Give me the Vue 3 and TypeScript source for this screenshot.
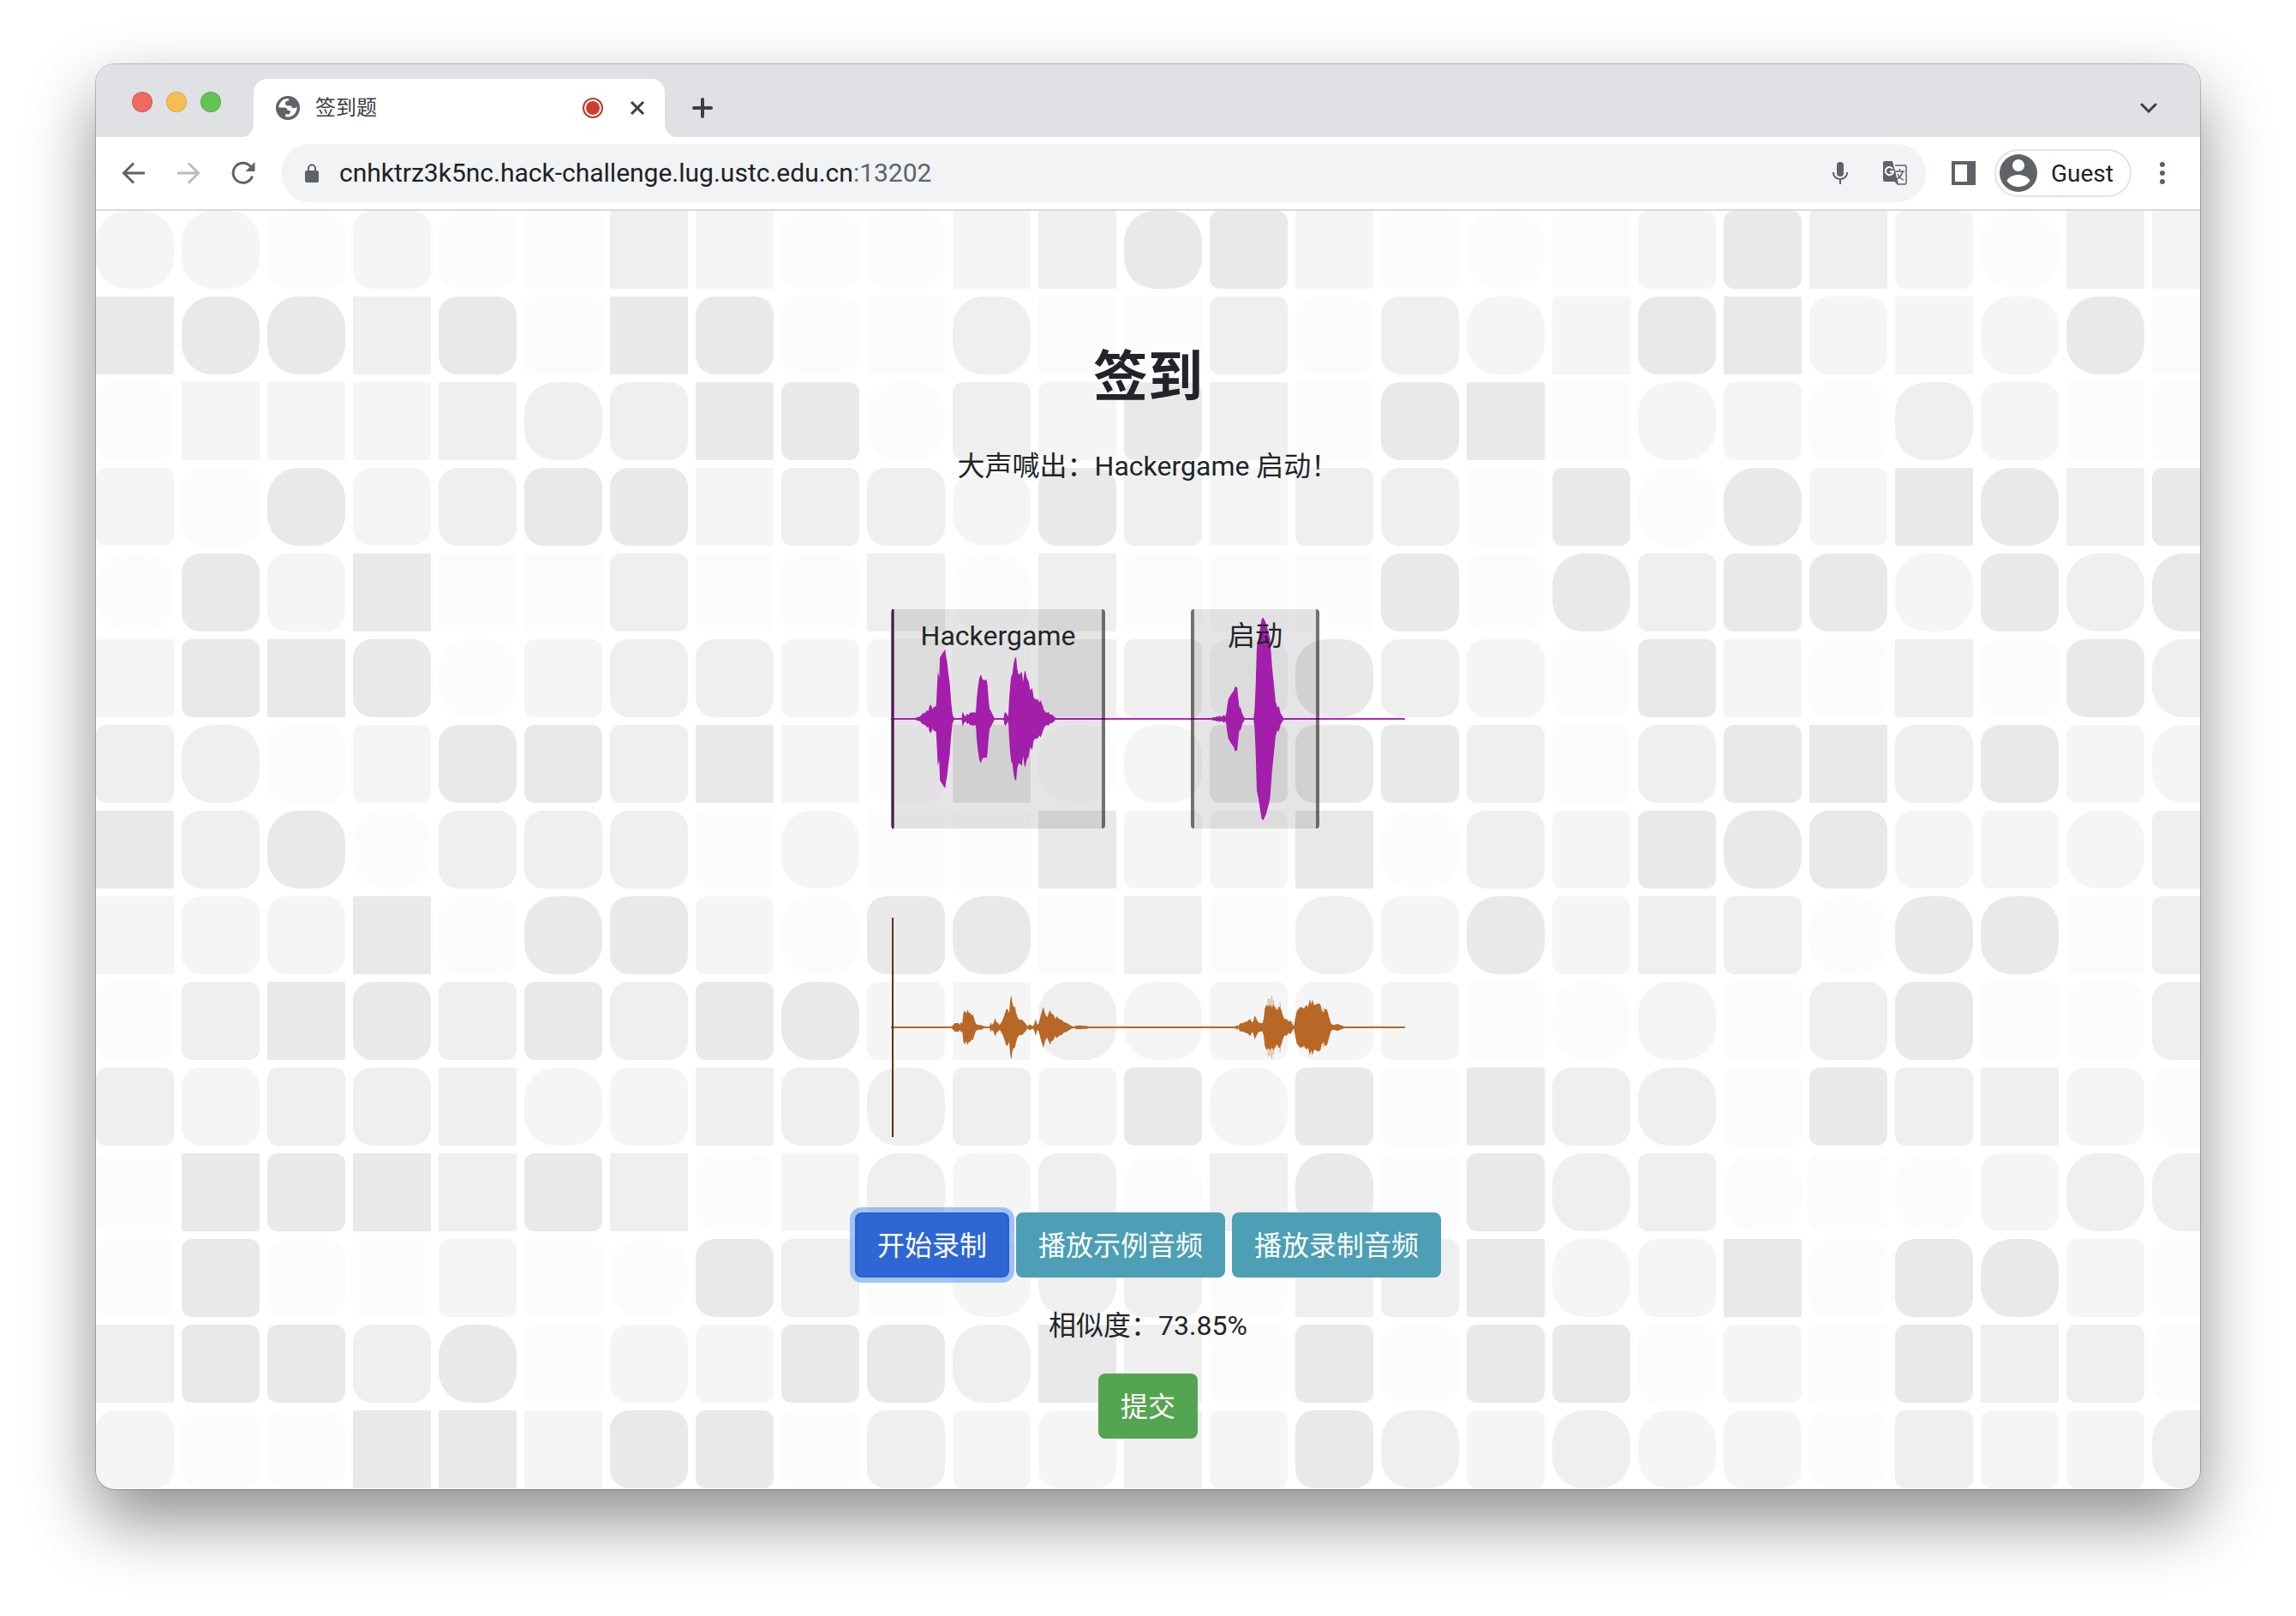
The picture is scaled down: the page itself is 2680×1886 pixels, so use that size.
<script setup lang="ts">
import { ref } from 'vue'

type Sample = [number, number]

// Each tile is a shade (A lightest to D darkest) and a corner size (0 to 3).
const rows: string[] = [
  'B3 B3 A2 B2 A2 A0 C0 B0 A2 A2 B0 C0 D3 D1 B0 A1 A3 A0 B1 D1 C0 B1 A3 C0 B0',
  'D0 D3 D3 C0 D2 A1 D0 D2 A2 A0 C3 A0 A0 C1 A2 C2 B3 B0 D2 D0 B2 B0 B3 D3 A0',
  'A2 B0 B0 B0 C0 C3 C2 D0 D1 A3 C1 B1 D1 C0 A0 D2 D0 A0 B3 B1 A2 C3 B2 A0 A1',
  'B1 A2 D3 B2 C2 D2 D2 B0 C1 C2 B3 D2 C1 B0 C1 C2 A1 D1 A3 D3 B1 D0 D3 C0 D1',
  'A3 D2 B2 D0 A0 A0 C1 A0 A2 C0 A3 C0 A1 A0 A0 D2 A2 D3 C1 D1 D2 B3 D2 C3 D3',
  'B0 D1 D0 D2 A3 B1 C2 C2 B1 B1 A1 C0 C1 B2 D3 C2 B2 A2 D1 B0 A2 C0 A2 D2 C3',
  'C1 C3 A2 B1 D2 D1 C1 D0 B0 A2 D0 A3 B3 D1 D2 D1 C1 A1 C2 D1 D0 C2 D2 B1 B3',
  'D0 C2 D3 A3 C2 C2 C2 A1 B3 A0 A0 D0 B1 B1 D0 A3 C2 B1 D1 D3 D2 B2 B1 B3 C1',
  'B0 B2 B2 D0 A2 D3 D2 B1 A3 D2 D3 A0 C0 A0 C3 B2 D3 B1 C0 C1 A3 D3 D3 A0 C1',
  'A2 C1 D0 D2 C1 D1 C2 D1 D3 B1 B0 C3 B3 B1 B2 B1 A1 A3 B3 A1 C2 D2 A1 A2 C2',
  'C1 B2 C1 C2 C0 B3 B2 C0 C2 C3 C1 B1 D1 B3 D1 A1 D0 C2 C3 A1 D1 C1 C0 B2 A2',
  'A1 D0 D1 D0 C0 D1 C0 A2 B0 C3 B2 C2 A3 C0 D3 A1 D1 C3 C1 A3 A1 A3 B2 C3 C3',
  'A1 D1 A2 A0 B1 A1 A3 D2 C1 A1 B3 C3 C2 A2 C0 C1 D0 B3 B2 D0 A2 D2 D3 B1 A1',
  'C0 D1 D1 C2 D3 A1 B2 B1 D1 D2 C3 D0 C0 A1 D1 A2 D1 D1 A2 B1 A0 D1 C0 C1 A2',
  'B2 A2 A2 D0 D0 B0 D2 D1 A1 C2 B1 B2 C0 B1 D2 C3 B1 C3 B3 B2 A2 C1 B1 B1 C3',
]
const tiles = rows.join(' ').split(' ')

// Time and amplitude pairs; the plot spans times 50 to 1520, amplitudes -384 to 384.
const exampleSamples: Sample[] = [
  [118, 2], [125, 6], [133, 8], [138, 16], [145, 22], [148, 20], [152, 30], [157, 28], [160, 44], [163, 50],
  [167, 42], [169, 34], [173, 42], [179, 44], [181, 90], [184, 165], [188, 145], [190, 215], [195, 225],
  [200, 235], [205, 243], [208, 215], [210, 205], [214, 160], [218, 125], [222, 60], [226, 15], [230, 4], [235, 1],
  [252, 2], [255, 26], [259, 14], [263, 8], [268, 18], [272, 14], [276, 22], [281, 22], [286, 24], [290, 20],
  [293, 28], [295, 70], [299, 115], [303, 145], [307, 155], [312, 138], [318, 135], [323, 138], [326, 120],
  [329, 70], [332, 35], [337, 25], [342, 12], [346, 2], [372, 2], [374, 18], [377, 24], [381, 18], [384, 8],
  [386, 20], [388, 70], [391, 120], [394, 150], [397, 155], [401, 195], [405, 215], [408, 215], [411, 175],
  [415, 155], [420, 158], [424, 165], [428, 130], [431, 160], [434, 170], [438, 145], [444, 130], [448, 100],
  [454, 108], [458, 75], [464, 68], [470, 68], [474, 58], [478, 65], [484, 45], [488, 30], [495, 20], [500, 25],
  [505, 16], [512, 14], [518, 6], [525, 1], [955, 2], [958, 4], [962, 1], [970, 5], [978, 6], [982, 10], [986, 6],
  [989, 12], [992, 8], [997, 8], [1002, 14], [1006, 8], [1009, 20], [1012, 50], [1015, 70], [1022, 85], [1030, 98],
  [1034, 113], [1040, 110], [1043, 75], [1046, 42], [1050, 38], [1054, 20], [1058, 10], [1062, 2], [1087, 2],
  [1090, 35], [1093, 120], [1096, 250], [1101, 280], [1106, 320], [1110, 350], [1115, 355], [1122, 335],
  [1128, 310], [1134, 280], [1140, 180], [1146, 110], [1150, 60], [1155, 40], [1159, 45], [1164, 20], [1170, 8], [1174, 1],
]
const recordedSamples: Sample[] = [
  [222, 2], [228, 8], [233, 16], [238, 14], [243, 16], [247, 8], [250, 18], [254, 14], [257, 50], [261, 60],
  [265, 48], [269, 62], [273, 50], [277, 52], [280, 42], [284, 46], [288, 30], [293, 12], [300, 8], [308, 8],
  [316, 4], [324, 2], [332, 2], [335, 18], [338, 8], [343, 14], [348, 32], [352, 18], [356, 16], [360, 8],
  [364, 14], [370, 28], [375, 45], [380, 65], [384, 62], [388, 50], [391, 95], [394, 110], [397, 85], [401, 70],
  [404, 75], [408, 50], [412, 35], [418, 26], [424, 28], [430, 20], [436, 12], [440, 4], [446, 10], [450, 8],
  [455, 4], [459, 10], [464, 30], [468, 10], [472, 12], [476, 30], [480, 50], [486, 72], [491, 45], [497, 35],
  [501, 50], [505, 60], [509, 48], [514, 46], [520, 30], [524, 38], [530, 30], [538, 26], [545, 18], [552, 16],
  [560, 10], [568, 4], [574, 3], [580, 6], [590, 7], [600, 5], [610, 5], [620, 1], [1030, 2], [1036, 4], [1040, 8],
  [1043, 3], [1048, 14], [1055, 14], [1062, 18], [1070, 22], [1077, 30], [1082, 18], [1086, 20], [1090, 42],
  [1095, 30], [1100, 18], [1106, 15], [1112, 14], [1116, 30], [1119, 65], [1124, 80], [1129, 72], [1134, 80],
  [1139, 70], [1144, 80], [1150, 65], [1155, 60], [1158, 72], [1163, 70], [1167, 58], [1171, 40], [1176, 28],
  [1181, 30], [1187, 20], [1193, 24], [1198, 12], [1202, 4], [1206, 30], [1210, 55], [1216, 65], [1221, 72],
  [1227, 68], [1232, 65], [1237, 78], [1243, 72], [1248, 98], [1252, 80], [1255, 98], [1260, 78], [1266, 80], [1272, 85],
  [1278, 80], [1282, 60], [1287, 50], [1291, 65], [1297, 62], [1302, 40], [1308, 14], [1314, 8], [1320, 10],
  [1327, 12], [1335, 8], [1345, 4], [1355, 1],
]
const peaks: Sample[] = [[394, 110], [1129, 102], [1134, 100], [1139, 110], [1144, 95], [1151, 72], [1163, 88], [1232, 72], [1287, 70]]

function envelope(samples: Sample[]): string {
  const top = samples.map(([x, a]) => `${x} ${-a}`)
  const bottom = [...samples].reverse().map(([x, a]) => `${x} ${a}`)
  return `M${top.join('L')}L${bottom.join('L')}Z`
}
const examplePath = envelope(exampleSamples)
const recordedPath = envelope(recordedSamples)
const peakPath = peaks.map(([x, a]) => `M${x} ${-a}V${a}`).join('')

const similarity = ref(73.85)
</script>

<template>
  <div class="desktop">
    <div class="window">
      <header class="tabstrip">
        <div class="lights"><i class="red"></i><i class="yellow"></i><i class="green"></i></div>
        <div class="tab">
          <svg class="globe" viewBox="0 0 28 28" width="28" height="28">
            <circle cx="14" cy="14" r="14" fill="#5f6368" />
            <path fill="#fff" d="M15 3.200C12 2.800 9 4 7.200 5.600C4.800 7.600 3.400 10.700 3.300 13.500L9 13.500C12 13.500 13.700 14.700 13.700 17L16.600 17L16.600 19.200C16.600 20.700 15.600 21.200 14 21.200L11.200 21.200L11.200 24.300C14.700 25.200 19 24 21.600 21.200C23.600 19 24.800 16 24.600 13L21.500 14.300C19.500 14.300 18.300 13.400 18 11.400L14 11.400C12 11.400 11 10.200 11 8.500C11 6.600 12.200 5.600 15 5.600Z" />
          </svg>
          <span class="title">签到题</span>
          <svg viewBox="0 0 24 24" width="24" height="24"><circle cx="12" cy="12" r="11" fill="none" stroke="#c5392b" stroke-width="2" /><circle cx="12" cy="12" r="8" fill="#c93f2f" /></svg>
          <button class="icon close" aria-label="Close tab"><svg viewBox="0 0 20 20" width="20" height="20"><path d="M3 3L17 17M17 3L3 17" stroke="#3c4043" stroke-width="3" /></svg></button>
        </div>
        <button class="icon" aria-label="New tab"><svg viewBox="0 0 24 24" width="24" height="24"><path d="M12 2V22M2 12H22" stroke="#3c4043" stroke-width="4" stroke-linecap="round" /></svg></button>
        <button class="icon search" aria-label="Search tabs"><svg viewBox="0 0 20 12" width="20" height="12"><path d="M2 2L10 10L18 2" fill="none" stroke="#3c4043" stroke-width="3" stroke-linecap="round" /></svg></button>
      </header>

      <nav class="toolbar">
        <button class="icon" aria-label="Back"><svg viewBox="0 0 28 28" width="28" height="28"><path d="M27 14H3M14 2.500L2.500 14L14 25.500" fill="none" stroke="#5f6368" stroke-width="3" /></svg></button>
        <button class="icon" aria-label="Forward"><svg viewBox="0 0 28 28" width="28" height="28"><path d="M1 14H25M14 2.500L25.500 14L14 25.500" fill="none" stroke="#babcbe" stroke-width="3" /></svg></button>
        <button class="icon" aria-label="Reload"><svg viewBox="0 0 28 28" width="28" height="28"><path d="M24.500 17.500A11.500 11.500 0 1 1 22.500 6.500" fill="none" stroke="#5f6368" stroke-width="3" /><path d="M27.500 1V12H16.500Z" fill="#5f6368" /></svg></button>
        <div class="omnibox">
          <svg viewBox="0 0 18 22" width="18" height="22"><rect x="1" y="8" width="16" height="14" rx="2" fill="#5f6368" /><path d="M5 9V5.500A4 4 0 0 1 13 5.500V9" fill="none" stroke="#5f6368" stroke-width="2" /></svg>
          <span class="url">cnhktrz3k5nc.hack-challenge.lug.ustc.edu.cn<span class="port">:13202</span></span>
          <button class="icon" aria-label="Microphone in use"><svg viewBox="0 0 20 26" width="20" height="26"><rect x="6" y="0" width="8" height="17" rx="4" fill="#5f6368" /><path d="M2 12V13A8 7 0 0 0 18 13V12M10 20V26" fill="none" stroke="#5f6368" stroke-width="2" /></svg></button>
          <button class="icon translate" aria-label="Translate this page"><svg viewBox="0 0 28 28" width="28" height="28">
            <path d="M14 5H25.500A1.500 1.500 0 0 1 27 6.500V25.500A1.500 1.500 0 0 1 25.500 27H17L13 22" fill="none" stroke="#5f6368" stroke-width="1.500" />
            <path d="M2 0H11L18 27L14 24H2A2 2 0 0 1 0 22V2A2 2 0 0 1 2 0Z" fill="#5f6368" />
            <path d="M14 12H25M19.500 9V12M23 12C22 17 18 20 15 22M17 15C19 19 21 21 24 22" fill="none" stroke="#5f6368" stroke-width="1.500" />
            <path d="M11.200 9A4.600 4.600 0 1 0 12 12.300H7.800" fill="none" stroke="#fff" stroke-width="2" />
          </svg></button>
        </div>
        <button class="icon" aria-label="Side panel"><svg viewBox="0 0 28 28" width="28" height="28"><path d="M0 0H28V28H0ZM4 4V24H18V4Z" fill="#5f6368" fill-rule="evenodd" /></svg></button>
        <button class="profile">
          <svg viewBox="0 0 44 44" width="44" height="44"><circle cx="22" cy="22" r="22" fill="#5f6368" /><circle cx="22" cy="13" r="7" fill="#fff" /><path d="M8.500 31C10 26.500 17 24 22 24S34 26.500 35.500 31C32 36 27 38 22 38S12 36 8.500 31Z" fill="#fff" /></svg>
          Guest
        </button>
        <button class="icon" aria-label="Menu"><svg viewBox="0 0 8 28" width="8" height="28"><circle cx="4" cy="4" r="3" fill="#5f6368" /><circle cx="4" cy="14" r="3" fill="#5f6368" /><circle cx="4" cy="24" r="3" fill="#5f6368" /></svg></button>
      </nav>

      <main class="page">
        <div class="tiles" aria-hidden="true">
          <i v-for="(tile, n) in tiles" :key="n" :class="['shade' + tile[0], 'corner' + tile[1]]"></i>
        </div>
        <div class="content">
          <h1>签到</h1>
          <p class="prompt">大声喊出：Hackergame 启动！</p>

          <div class="wave example">
            <svg viewBox="50 -384 1470 768" preserveAspectRatio="none"><path :d="examplePath" /><rect x="50" y="-3" width="1470" height="6" /></svg>
            <div class="region first">Hackergame</div>
            <div class="region second">启动</div>
            <div class="cursor"></div>
          </div>

          <div class="wave recorded">
            <svg viewBox="50 -384 1470 768" preserveAspectRatio="none"><path :d="recordedPath" /><path class="peaks" :d="peakPath" /><rect x="50" y="-3" width="1470" height="6" /></svg>
            <div class="cursor"></div>
          </div>

          <div class="actions">
            <button class="btn primary">开始录制</button>
            <button class="btn info">播放示例音频</button>
            <button class="btn info">播放录制音频</button>
          </div>
          <p class="score">相似度：{{ similarity }}%</p>
          <button class="btn success">提交</button>
        </div>
      </main>
    </div>
  </div>
</template>

<style>
body {
  background: #fff;
}
</style>

<style scoped>
* {
  box-sizing: border-box;
}
.desktop {
  padding: 75px 112px 148px;
  overflow: hidden;
  font-family: Roboto, "Noto Sans CJK SC", sans-serif;
  color: #212529;
}
.window {
  border-radius: 22px;
  overflow: hidden;
  background: #fff;
  box-shadow: 0 0 0 1px rgba(0, 0, 0, 0.22), 0 36px 80px rgba(0, 0, 0, 0.45);
}
button {
  font: inherit;
  color: inherit;
  cursor: pointer;
}
svg {
  display: block;
  flex: none;
}
.icon {
  display: flex;
  padding: 0;
  border: 0;
  background: none;
}

.tabstrip {
  display: flex;
  align-items: center;
  height: 85px;
  padding: 17px 50px 0 42px;
  background: #dfe1e5;
}
.lights {
  display: flex;
  gap: 16px;
  margin: 0 38px 14px 0;
}
.lights i {
  width: 24px;
  height: 24px;
  border-radius: 50%;
  border: 1px solid rgba(0, 0, 0, 0.12);
}
.red { background: #ed6a5f; }
.yellow { background: #f5bf4f; }
.green { background: #61c554; }
.tab {
  position: relative;
  display: flex;
  align-items: center;
  width: 480px;
  height: 68px;
  padding: 0 22px 0 26px;
  margin-right: 32px;
  border-radius: 16px 16px 0 0;
  background: #fff;
}
.tab::before,
.tab::after {
  content: "";
  position: absolute;
  bottom: 0;
  width: 16px;
  height: 16px;
}
.tab::before {
  right: 100%;
  background: radial-gradient(circle at 0 0, transparent 16px, #fff 17px);
}
.tab::after {
  left: 100%;
  background: radial-gradient(circle at 100% 0, transparent 16px, #fff 17px);
}
.title {
  flex: 1;
  margin-left: 18px;
  font-size: 24px;
  line-height: 32px;
  color: #3c4043;
}
.close {
  margin-left: 30px;
}
.search {
  margin-left: auto;
}

.toolbar {
  display: flex;
  align-items: center;
  height: 86px;
  padding: 0 40px 0 30px;
  border-bottom: 2px solid #d9dadc;
}
.toolbar > .icon + .icon {
  margin-left: 36px;
}
.omnibox {
  display: flex;
  align-items: center;
  flex: 1;
  height: 68px;
  margin: 0 30px 0 30px;
  padding: 0 22px 0 27px;
  border-radius: 34px;
  background: #f1f3f4;
}
.url {
  flex: 1;
  margin-left: 23px;
  font-size: 30px;
  line-height: 36px;
  color: #202124;
}
.port {
  color: #5f6368;
}
.translate {
  margin-left: 40px;
}
.profile {
  display: flex;
  align-items: center;
  gap: 16px;
  width: 160px;
  height: 56px;
  margin: 0 32px 0 22px;
  padding: 0 4px;
  border: 2px solid #e2e3e5;
  border-radius: 28px;
  background: #fff;
  font-size: 28px;
  color: #202124;
}

.page {
  position: relative;
}
.tiles {
  position: absolute;
  inset: 0;
  display: grid;
  grid-template-columns: repeat(25, 91px);
  grid-auto-rows: 91px;
  gap: 9px;
  overflow: hidden;
}
.shadeA { background: #fcfcfc; }
.shadeB { background: #f5f5f5; }
.shadeC { background: #efefef; }
.shadeD { background: #e9e9e9; }
.corner0 { border-radius: 2px; }
.corner1 { border-radius: 12px; }
.corner2 { border-radius: 22px; }
.corner3 { border-radius: 36px; }
.content {
  position: relative;
  display: flex;
  flex-direction: column;
  align-items: center;
  padding: 157px 0 59px;
  font-size: 32px;
  line-height: 48px;
}
h1,
p {
  margin: 0;
}
h1 {
  font-size: 64px;
  line-height: 76px;
  font-weight: 600;
}
.prompt {
  margin-top: 41px;
}
.wave {
  position: relative;
  width: 600px;
  height: 256px;
}
.wave svg {
  width: 100%;
  height: 100%;
}
.example {
  margin-top: 143px;
  fill: #b722c0;
}
.recorded {
  margin-top: 104px;
  fill: #b86726;
}
.peaks {
  stroke: #b86726;
  stroke-width: 4;
  stroke-opacity: 0.35;
}
.region {
  position: absolute;
  top: 0;
  bottom: 0;
  padding-top: 7px;
  text-align: center;
  border: solid rgba(0, 0, 0, 0.5);
  border-width: 0 4px;
  border-radius: 4px;
  background: rgba(0, 0, 0, 0.1);
}
.first {
  left: 0;
  width: 250px;
}
.second {
  left: 350px;
  width: 150px;
}
.cursor {
  position: absolute;
  top: 0;
  bottom: 0;
  left: 1px;
  width: 2px;
}
.example .cursor { background: #5a0f60; }
.recorded .cursor { background: #5c3310; }
.actions {
  display: flex;
  gap: 8px;
  margin-top: 88px;
}
.btn {
  padding: 13px 24px 11px;
  border: 2px solid transparent;
  border-radius: 8px;
  color: #fff;
}
.primary {
  background: #2e66d3;
  border-color: #2a5fc8;
  box-shadow: 0 0 0 6px rgba(77, 143, 245, 0.52);
}
.info {
  background: #4c9fb5;
  border-color: #4c9fb5;
}
.success {
  background: #54a551;
  border-color: #54a551;
}
.score {
  margin: 32px 0;
}
</style>
